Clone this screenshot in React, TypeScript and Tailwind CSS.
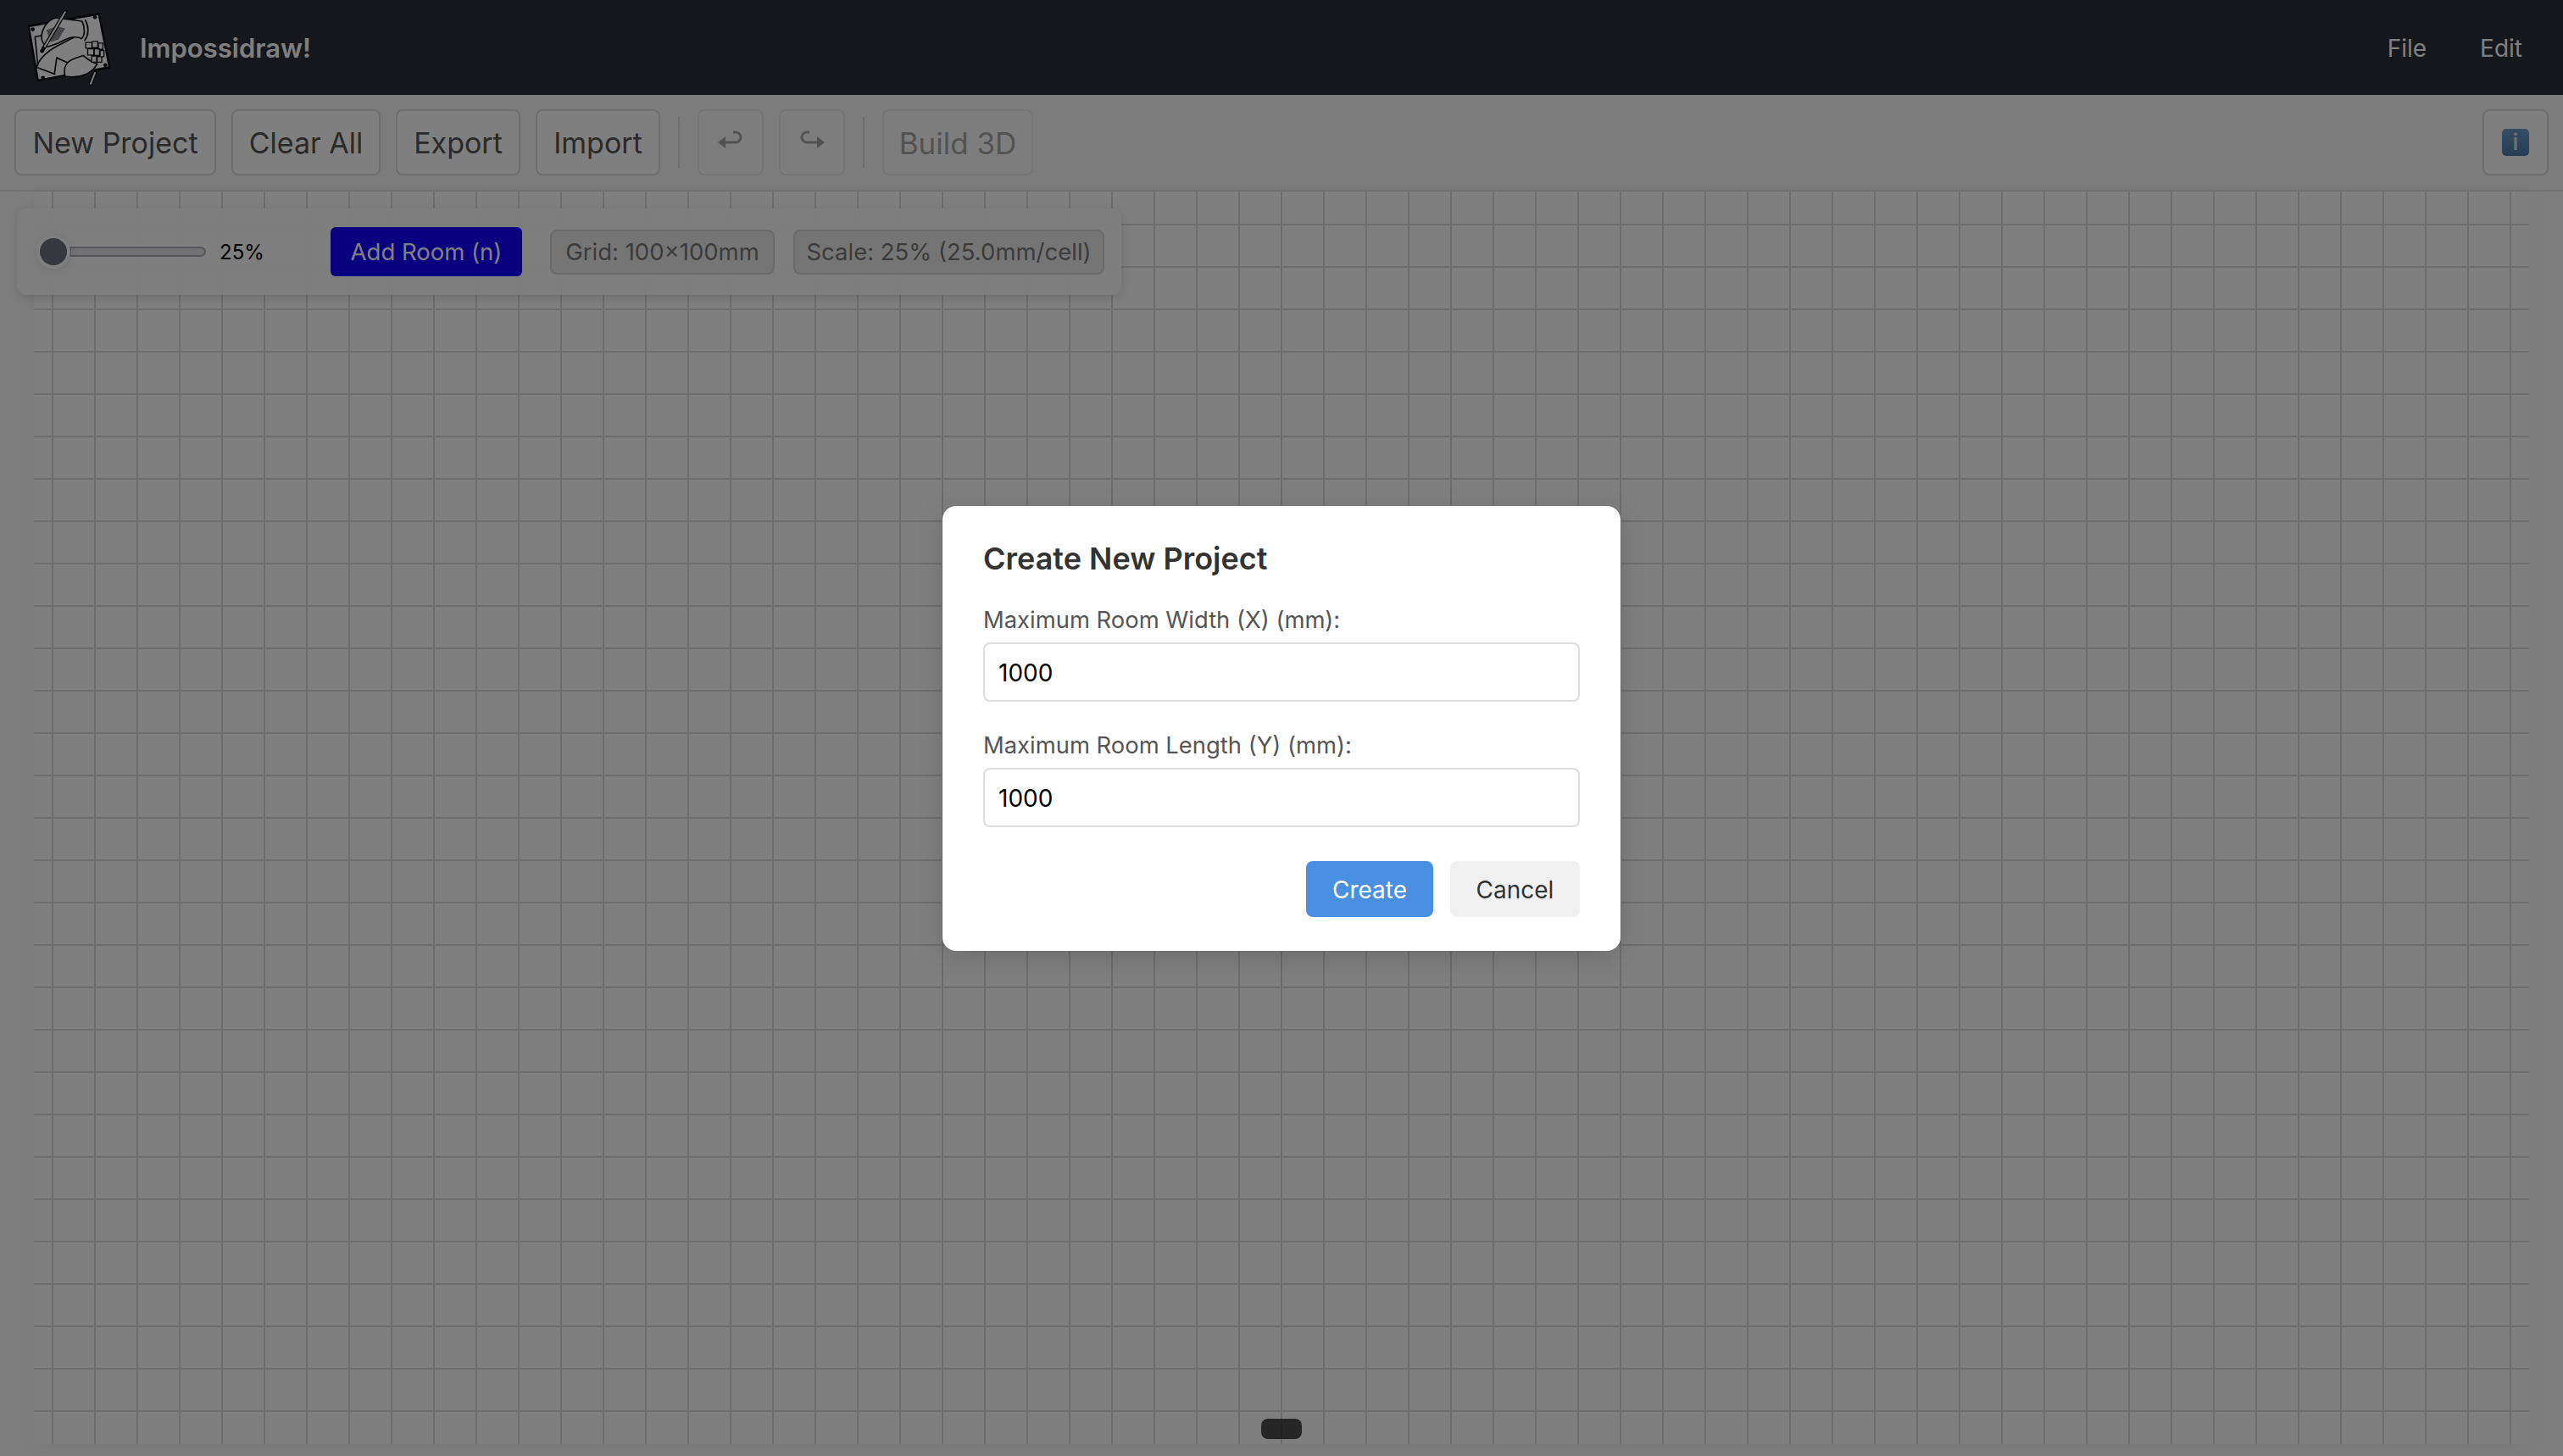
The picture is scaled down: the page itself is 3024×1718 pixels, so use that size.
const toolBtn =
  "h-[78px] border-2 border-[#ddd] rounded-lg bg-white text-[#555] text-[34px] leading-none flex items-center justify-center";

function Logo() {
  return (
    <svg viewBox="100 35 292 268" className="w-[97px] h-[89px] shrink-0" fill="none" stroke="#101114" strokeWidth="5" strokeLinecap="round" strokeLinejoin="round">
      <path d="M102 92 L352 48 L390 238 L135 285 Z" fill="#fff" strokeWidth="8" />
      <circle cx="117" cy="103" r="7" fill="#101114" stroke="none" />
      <circle cx="338" cy="60" r="7" fill="#101114" stroke="none" />
      <circle cx="375" cy="230" r="7" fill="#101114" stroke="none" />
      <circle cx="153" cy="275" r="7" fill="#101114" stroke="none" />
      <path d="M125 130 L155 124 M125 130 L135 232" />
      <path d="M148 128 C152 95 172 68 200 62 L292 74 C304 100 302 125 290 136 C262 122 236 138 208 152 L170 165 C156 158 148 145 148 128 Z" fill="#fff" />
      <path d="M304 70 C316 95 316 122 302 142" />
      <path d="M165 105 L205 92 L232 100 L208 140 L180 148 Z" fill="#8a8a8f" stroke="none" />
      <path d="M130 240 C140 205 170 180 208 160 L262 132" />
      <path d="M202 204 L246 224 M202 204 L194 262 M135 240 L195 262" />
      <path d="M232 270 C224 240 236 218 262 208 L296 196 C312 210 330 222 346 226 C330 256 290 280 232 270 Z" fill="#fff" />
      <path d="M305 150 h22 v20 h-22 Z M328 146 h20 v22 h-20 Z M350 152 h16 v22 h-16 Z M312 172 h22 v22 h-22 Z M336 172 h18 v24 h-18 Z M356 178 h14 v22 h-14 Z M326 198 h18 v22 h-18 Z M346 200 h16 v20 h-16 Z" fill="#fff" strokeWidth="4" />
      <path d="M232 42 L150 180" stroke="#101114" strokeWidth="14" />
      <path d="M232 42 L160 164" stroke="#fff" strokeWidth="6" />
      <path d="M340 252 L322 298" stroke="#101114" strokeWidth="14" />
      <path d="M338 258 L323 296" stroke="#fff" strokeWidth="6" />
    </svg>
  );
}

function UndoIcon() {
  return (
    <svg viewBox="0 0 30 22" className="w-[30px] h-[22px] -translate-y-[3px]" fill="none">
      <path d="M9 14 H21 A6 6 0 0 0 21 2 H18" stroke="currentColor" strokeWidth="3" />
      <path d="M0 14 L9 7 V21 Z" fill="currentColor" />
    </svg>
  );
}

function RedoIcon() {
  return (
    <svg viewBox="0 0 30 22" className="w-[30px] h-[22px] -translate-y-[3px]" fill="none">
      <path d="M21 14 H9 A6 6 0 0 1 9 2 H12" stroke="currentColor" strokeWidth="3" />
      <path d="M30 14 L21 7 V21 Z" fill="currentColor" />
    </svg>
  );
}

function Field({ label, className }: { label: string; className?: string }) {
  return (
    <div className={className}>
      <label className="block text-[27.4px] leading-[34px] text-[#555] mb-[10px]">{label}</label>
      <input
        readOnly
        value="1000"
        className="w-full h-[70px] px-[16px] pt-[2px] border-2 border-[#ddd] rounded-lg text-[28px] text-black bg-white outline-none"
      />
    </div>
  );
}

export default function App() {
  return (
    <div className="relative h-screen flex flex-col bg-[#fdfdfd] overflow-hidden font-[Inter,sans-serif]">
      <header className="h-[112px] shrink-0 bg-[#2c2e38] flex items-center pl-[33px] pr-[48px]">
        <Logo />
        <h1 className="ml-[35px] text-[31px] font-semibold text-white pt-[2px]">Impossidraw!</h1>
        <nav className="ml-auto flex gap-[63px] text-[28px] text-white pt-[2px]">
          <span>File</span>
          <span>Edit</span>
        </nav>
      </header>

      <div className="h-[114px] shrink-0 bg-[#f8f8f8] border-b-2 border-[#e6e6e6] flex items-center pl-[17px] pr-[17px]">
        <div className="flex items-center gap-[18px]">
          <button className={`${toolBtn} w-[238px] pt-[2px]`}>New Project</button>
          <button className={`${toolBtn} w-[176px] pt-[2px]`}>Clear All</button>
          <button className={`${toolBtn} w-[147px] pt-[2px]`}>Export</button>
          <button className={`${toolBtn} w-[147px] pt-[2px]`}>Import</button>
          <div className="w-[2px] h-[60px] bg-[#ddd] mx-[3px]" />
          <button className={`${toolBtn} w-[78px] opacity-50`}><UndoIcon /></button>
          <button className={`${toolBtn} w-[78px] opacity-50`}><RedoIcon /></button>
          <div className="w-[2px] h-[60px] bg-[#ddd] mx-[3px]" />
          <button className={`${toolBtn} w-[178px] opacity-50 pt-[2px] !text-[35px]`}>Build 3D</button>
        </div>
        <button className={`${toolBtn} w-[78px] ml-auto`}>
          <span className="w-[32px] h-[32px] rounded-[5px] bg-gradient-to-b from-[#6c9ccc] to-[#4e7aa6] text-[#ddd] text-[26px] font-semibold leading-none flex items-center justify-center">i</span>
        </button>
      </div>

      <main className="relative flex-1 pl-[40px] pr-[40px] pb-[14px]">
        <div className="h-full bg-white shadow-[0_0_24px_rgba(0,0,0,0.06)] bg-[linear-gradient(to_right,#dcdcdc_2px,transparent_2px),linear-gradient(to_bottom,#dcdcdc_2px,transparent_2px)] bg-[size:50px_50px] bg-[position:21px_38px]" />

        <div className="absolute left-[20px] top-[20px] w-[1303px] h-[102px] rounded-xl bg-[#fcfcfc]/95 shadow-[0_4px_14px_rgba(0,0,0,0.14)] flex items-center pl-[24px]">
          <div className="relative w-[220px] h-[58px] flex items-center shrink-0">
            <div className="ml-[38px] w-[161px] h-[12px] rounded-r-md border-2 border-[#aaabb8] bg-[#e2e2e8]" />
            <div className="absolute left-[3px] top-[13px] w-[32px] h-[32px] rounded-full bg-[#6c6e7e] shadow-[0_0_0_4px_#fff,0_2px_8px_4px_rgba(0,0,0,0.1)]" />
          </div>
          <span className="text-[24px] text-black w-[50px] -ml-[5px] pt-[2px]">25%</span>
          <button className="ml-[81px] w-[226px] h-[58px] rounded-md bg-[#1400ff] text-white text-[27.5px] pt-[2px]">Add Room (n)</button>
          <span className="ml-[33px] w-[265px] h-[53px] pt-[2px] rounded-lg border-2 border-[#d6d6d6] bg-[#ebebeb] text-[#777] text-[27.5px] flex items-center justify-center">Grid: 100×100mm</span>
          <span className="ml-[22px] w-[367px] h-[53px] pt-[2px] rounded-lg border-2 border-[#d6d6d6] bg-[#ebebeb] text-[#777] text-[27.5px] flex items-center justify-center">Scale: 25% (25.0mm/cell)</span>
        </div>

        <div className="absolute left-1/2 -translate-x-1/2 bottom-[20px] w-[48px] h-[24px] rounded-lg bg-black/70" />
      </main>

      <div className="absolute inset-0 bg-black/50 flex items-center justify-center">
        <div className="w-[800px] h-[525px] bg-white rounded-2xl px-[48px] pt-[40px] shadow-[0_8px_32px_rgba(0,0,0,0.15)]">
          <h2 className="text-[36px] leading-[44px] font-semibold text-[#333]">Create New Project</h2>
          <Field label="Maximum Room Width (X) (mm):" className="mt-[33px]" />
          <Field label="Maximum Room Length (Y) (mm):" className="mt-[34px]" />
          <div className="mt-[40px] flex justify-end gap-[20px]">
            <button className="w-[150px] h-[66px] rounded-lg bg-[#4a90e2] text-white text-[28px] pt-[2px]">Create</button>
            <button className="w-[153px] h-[66px] rounded-lg bg-[#f0f0f0] text-[#333] text-[28px] pt-[2px]">Cancel</button>
          </div>
        </div>
      </div>
    </div>
  );
}
